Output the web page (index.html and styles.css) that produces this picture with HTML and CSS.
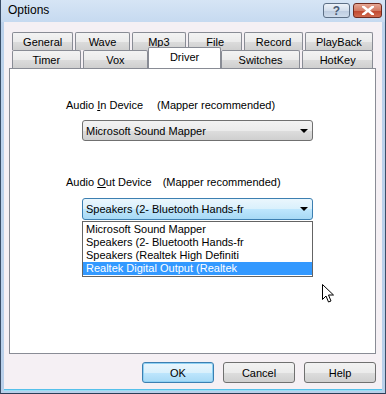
FILE: index.html
```html
<!DOCTYPE html>
<html>
<head>
<meta charset="utf-8">
<link rel="stylesheet" href="styles.css">
</head>
<body>
<div class="window">
  <div class="titlebar">
    <span class="title">Options</span>
    <div class="tbtns">
      <div class="tbtn help">?</div>
      <div class="tbtn close">
        <svg width="12" height="9" viewBox="0 0 12 9"><path d="M1 0.5 L11 8.5 M11 0.5 L1 8.5" stroke="#fff" stroke-width="2.6" stroke-linecap="square"/></svg>
      </div>
    </div>
  </div>
  <div class="client">
    <div class="tabs">
      <div class="row row1">
        <div class="tab w61">General</div>
        <div class="tab w54">Wave</div>
        <div class="tab w54">Mp3</div>
        <div class="tab w54">File</div>
        <div class="tab w58">Record</div>
        <div class="tab w69">PlayBack</div>
      </div>
      <div class="row row2">
        <div class="tab w68">Timer</div>
        <div class="tab w66">Vox</div>
        <div class="tab sel">Driver</div>
        <div class="tab w80">Switches</div>
        <div class="tab w71">HotKey</div>
      </div>
    </div>
    <div class="panel">
      <div class="label lbl1"><span>Audio <u>I</u>n Device</span><span class="hint h1">(Mapper recommended)</span></div>
      <div class="combo c1"><span>Microsoft Sound Mapper</span><i class="arrow"></i></div>
      <div class="label lbl2"><span>Audio <u>O</u>ut Device</span><span class="hint h2">(Mapper recommended)</span></div>
      <div class="combo c2 focus"><span>Speakers (2- Bluetooth Hands-fr</span><i class="arrow"></i>
        <ul class="list">
          <li>Microsoft Sound Mapper</li>
          <li>Speakers (2- Bluetooth Hands-fr</li>
          <li>Speakers (Realtek High Definiti</li>
          <li class="on">Realtek Digital Output (Realtek</li>
        </ul>
      </div>
      <svg class="cursor" width="13" height="20" viewBox="0 0 13 20"><path d="M0.5 0.5 L0.5 15.5 L4 12 L6.5 18 L9 17 L6.5 11 L11.5 11 Z" fill="#fff" stroke="#000" stroke-width="1" stroke-linejoin="miter"/></svg>
    </div>
    <div class="buttons">
      <div class="btn def">OK</div>
      <div class="btn">Cancel</div>
      <div class="btn">Help</div>
    </div>
  </div>
</div>
</body>
</html>
```
FILE: styles.css
```css
html, body { margin: 0; padding: 0; }
body { width: 386px; height: 394px; overflow: hidden; font-family: "Liberation Sans", Arial, sans-serif; font-size: 11px; color: #000; }
.window { width: 386px; height: 394px; box-sizing: border-box; display: flex; flex-direction: column;
  background: linear-gradient(#c4d8ee, #bcd2ec 30px, #b9d0ea); border-left: 1px solid #3a4e68; border-right: 1px solid #3a4e68; border-bottom: 1px solid #2a3e58; }
.titlebar { height: 22px; display: flex; align-items: center; justify-content: space-between; padding: 0 3px 0 7px; background: linear-gradient(#d6e5f5, #c6daf0); }
.title { font-size: 12px; color: #000; margin-top: -2px; }
.tbtns { display: flex; gap: 3px; align-self: flex-start; margin-top: 3px; }
.tbtn { height: 15px; box-sizing: border-box; border: 1px solid #5d6f85; border-radius: 3px; display: flex; align-items: center; justify-content: center; }
.help { width: 27px; background: linear-gradient(#edf2f8, #d3deec 50%, #bccbdf 51%, #cfdcec); color: #4a5c74; font-weight: bold; font-size: 12px; }
.close { width: 29px; border-color: #6e2a1f; background: linear-gradient(#e6a794, #d27a63 50%, #c0452c 51%, #d06b50); }
.client { flex: 1; margin: 0 3px 3px 3px; background: #f5f0f4; padding: 10px 6px 0 5px; border-bottom: 1px solid #55c0ea; box-shadow: 0 1px 0 #9adff5; }
.tabs { margin: 0 3px; }
.row { display: flex; height: 18px; }
.row1 { gap: 2px; }
.row2 { gap: 2px; }
.tab { box-sizing: border-box; height: 18px; border: 1px solid #898c95; border-bottom: none; border-radius: 2px 2px 0 0; background: linear-gradient(#f3f3f3, #ebebeb 50%, #dcdcdc 51%, #cfcfcf); display: flex; align-items: center; justify-content: center; padding-top: 1px; }
.w61 { width: 62px; } .w54 { width: 55px; } .w58 { width: 59px; } .w69 { width: 69px; }
.w68 { width: 69px; } .w66 { width: 66px; } .w80 { width: 80px; } .w71 { width: 71px; }
.row2 .w66 { margin-right: -2px; }
.row2 .sel + .tab { margin-left: -2px; }
.tab.sel { width: 73px; height: 21px; margin-top: -3px; background: #fff; position: relative; z-index: 2; padding-top: 0; padding-bottom: 2px; }
.panel { position: relative; height: 286px; box-sizing: border-box; border: 1px solid #898c95; background: #fff; margin-top: 0; }
.label { display: flex; padding-left: 56px; line-height: 13px; }
.lbl1 { margin-top: 30px; }
.h1 { margin-left: 14px; }
.lbl2 { margin-top: 35px; }
.h2 { margin-left: 11px; }
.combo { position: relative; box-sizing: border-box; margin-left: 72px; width: 231px; height: 21px; border: 1px solid #707070; border-radius: 3px; background: linear-gradient(#f2f2f2, #ebebeb 50%, #dddddd 51%, #cfcfcf); display: flex; align-items: center; padding-left: 3px; }
.c1 { margin-top: 8px; }
.c2 { margin-top: 9px; height: 22px; }
.focus { border-color: #3c7fb1; background: linear-gradient(#eaf6fd, #d9f0fc 50%, #bee6fd 51%, #a7d9f5); }
.arrow { position: absolute; right: 4px; top: 8px; width: 0; height: 0; border-left: 4px solid transparent; border-right: 4px solid transparent; border-top: 4px solid #000; }
.list { position: absolute; left: -1px; top: 22px; width: 231px; box-sizing: border-box; margin: 0; padding: 1px 0 1px; list-style: none; background: #fff; border: 1px solid #646464; z-index: 5; }
.list li { height: 13px; line-height: 13px; padding-left: 3px; white-space: nowrap; }
.list li.on { background: #3399ff; color: #fff; }
.cursor { position: absolute; left: 312px; top: 215px; }
.buttons { display: flex; justify-content: flex-end; gap: 9px; margin-top: 8px; margin-right: 0; }
.btn { width: 72px; height: 21px; box-sizing: border-box; border: 1px solid #707070; border-radius: 3px; background: linear-gradient(#f2f2f2, #ebebeb 50%, #dddddd 51%, #cfcfcf); display: flex; align-items: center; justify-content: center; }
.btn.def { border-color: #3c7fb1; background: linear-gradient(#eaf6fd, #d9f0fc 50%, #bee6fd 51%, #a7d9f5); box-shadow: inset 0 0 0 1px #8fd1f4; }
```
